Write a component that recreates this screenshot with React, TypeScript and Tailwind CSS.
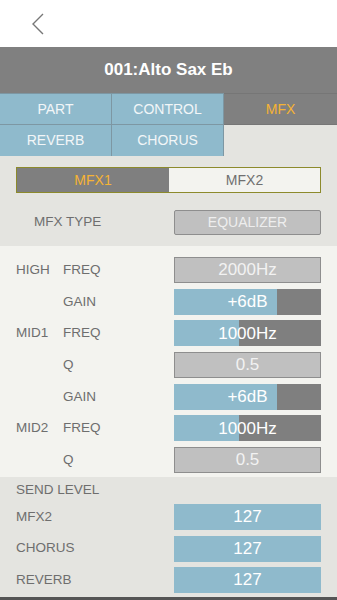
import React from "react";

const font = { fontFamily: '"Liberation Sans", Arial, sans-serif' };

function GrayBox({ text }: { text: string }) {
  return (
    <div className="w-[147px] h-[26px] bg-[#c0c0c0] border border-[#8e8e8e] flex items-center justify-center text-[17px] text-[#f2f2f2]">
      {text}
    </div>
  );
}

function Slider({ text, pct }: { text: string; pct: number }) {
  return (
    <div className="relative w-[147px] h-[26px] bg-[#7f7f7f] flex items-center justify-center text-[17px] text-white">
      <div className="absolute left-0 top-0 bottom-0 bg-[#8fbacc]" style={{ width: `${pct}%` }} />
      <span className="relative">{text}</span>
    </div>
  );
}

function Row({ a, b, children }: { a?: string; b?: string; children: React.ReactNode }) {
  return (
    <div className="flex items-center h-[26px]">
      <div className="w-[63px] pl-[16px] text-[13.5px] text-[#6e6e6e]">{a}</div>
      <div className="w-[111px] text-[13.5px] text-[#6e6e6e]">{b}</div>
      <div>{children}</div>
    </div>
  );
}

function SendRow({ label }: { label: string }) {
  return (
    <div className="flex items-center h-[26px]">
      <div className="w-[174px] pl-[16px] text-[13.5px] text-[#6e6e6e]">{label}</div>
      <div className="w-[147px] h-[26px] bg-[#8fbacc] flex items-center justify-center text-[17px] text-white">127</div>
    </div>
  );
}

export default function App() {
  return (
    <div className="w-[337px] h-[600px] overflow-hidden flex flex-col bg-[#e4e4e0]" style={font}>
      <div className="h-[47px] bg-white flex items-center pl-[30px] shrink-0">
        <svg width="16" height="24" viewBox="0 0 16 24">
          <path d="M13 2 L3 12 L13 22" fill="none" stroke="#777" strokeWidth="1.4" />
        </svg>
      </div>
      <div className="h-[46px] bg-[#808080] flex items-center justify-center text-white font-bold text-[17px] shrink-0">
        001:Alto Sax Eb
      </div>
      <div className="grid grid-cols-[112px_112px_113px] shrink-0">
        <div className="h-[32px] bg-[#8fbacc] border-r border-b border-t border-[#7d97a3] flex items-center justify-center text-[14px] text-[#f2f6f8]">PART</div>
        <div className="h-[32px] bg-[#8fbacc] border-r border-b border-t border-[#7d97a3] flex items-center justify-center text-[14px] text-[#f2f6f8]">CONTROL</div>
        <div className="h-[32px] bg-[#808080] border-b border-t border-[#767676] flex items-center justify-center text-[14px] text-[#f5b334]">MFX</div>
        <div className="h-[31px] bg-[#8fbacc] border-r border-[#7d97a3] flex items-center justify-center text-[14px] text-[#f2f6f8]">REVERB</div>
        <div className="h-[31px] bg-[#8fbacc] border-r border-[#7d97a3] flex items-center justify-center text-[14px] text-[#f2f6f8]">CHORUS</div>
        <div className="h-[31px] bg-[#e4e4e0]" />
      </div>
      <div className="h-[90px] bg-[#e4e4e0] flex flex-col pt-[11px] shrink-0">
        <div className="mx-[16px] h-[26px] border border-[#8c8a2c] flex">
          <div className="w-[152px] bg-[#7f7f7f] flex items-center justify-center text-[14px] text-[#f5b334]">MFX1</div>
          <div className="flex-1 bg-[#f3f3ef] flex items-center justify-center text-[14px] text-[#707070]">MFX2</div>
        </div>
        <div className="flex items-center mt-[17px] h-[25px]">
          <div className="w-[174px] pl-[34px] text-[13.5px] text-[#6e6e6e]">MFX TYPE</div>
          <div className="w-[147px] h-[25px] bg-[#c0c0c0] border border-[#8e8e8e] rounded-[2px] flex items-center justify-center text-[14px] text-[#eeeeee]">
            EQUALIZER
          </div>
        </div>
      </div>
      <div className="h-[231px] bg-[#f3f3ef] flex flex-col pt-[11px] gap-[5.7px] shrink-0">
        <Row a="HIGH" b="FREQ"><GrayBox text="2000Hz" /></Row>
        <Row b="GAIN"><Slider text="+6dB" pct={70} /></Row>
        <Row a="MID1" b="FREQ"><Slider text="1000Hz" pct={44} /></Row>
        <Row b="Q"><GrayBox text="0.5" /></Row>
        <Row b="GAIN"><Slider text="+6dB" pct={70} /></Row>
        <Row a="MID2" b="FREQ"><Slider text="1000Hz" pct={44} /></Row>
        <Row b="Q"><GrayBox text="0.5" /></Row>
      </div>
      <div className="flex-1 bg-[#e4e4e0] flex flex-col border-b-[3px] border-[#555555]">
        <div className="h-[27px] pl-[16px] flex items-center text-[13.5px] text-[#6e6e6e]">SEND LEVEL</div>
        <div className="flex flex-col gap-[5.5px]">
          <SendRow label="MFX2" />
          <SendRow label="CHORUS" />
          <SendRow label="REVERB" />
        </div>
      </div>
    </div>
  );
}
